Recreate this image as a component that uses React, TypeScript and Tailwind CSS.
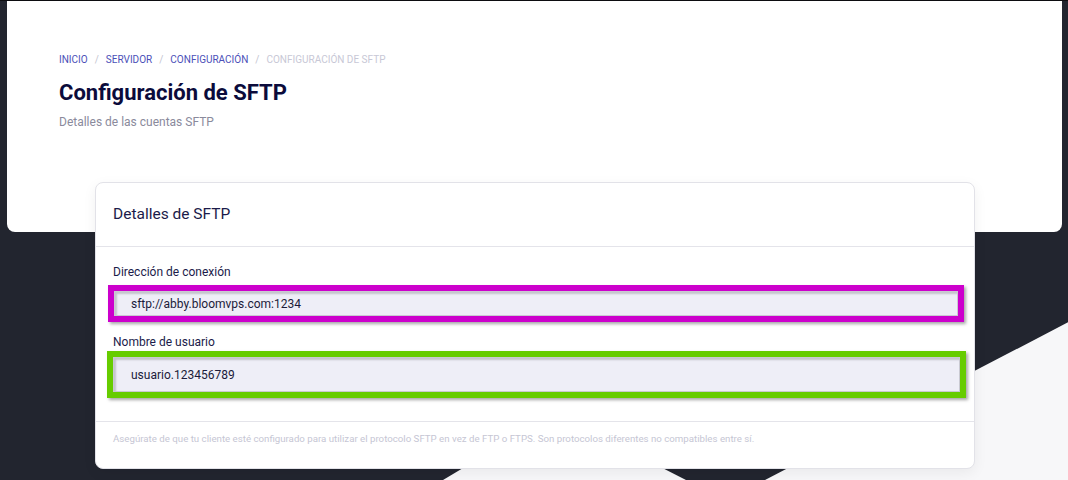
export default function App() {
  const font = { fontFamily: "Roboto, 'Liberation Sans', sans-serif" };

  return (
    <div
      className="relative h-[480px] w-full overflow-hidden bg-[#22252f] border-t border-[#0c0c10]"
      style={font}
    >
      {/* decorative zigzag behind the card */}
      <svg
        className="absolute inset-0 h-full w-full"
        viewBox="0 0 1068 480"
        preserveAspectRatio="none"
      >
        <polygon
          points="443,480 555,413 686,480 765,480 1068,322 1068,480"
          fill="#f7f7f9"
        />
      </svg>

      <div className="relative mx-[7px] mr-[6px] h-[231px] rounded-b-lg bg-white pl-[52px] pt-[51px]">
        <nav className="flex items-center gap-[7px] text-[10px] uppercase text-[#4b4fb8]">
          <span>Inicio</span>
          <span className="text-[#c4c4d0]">/</span>
          <span>Servidor</span>
          <span className="text-[#c4c4d0]">/</span>
          <span>Configuración</span>
          <span className="text-[#c4c4d0]">/</span>
          <span className="text-[#c8c8d6]">Configuración de SFTP</span>
        </nav>
        <h1 className="mt-[11px] text-[22px] font-bold leading-[30px] text-[#0b0b3b]">
          Configuración de SFTP
        </h1>
        <p className="mt-[5px] text-[12px] text-[#8a8a9c]">Detalles de las cuentas SFTP</p>
      </div>

      <div className="relative ml-[95px] -mt-[50px] h-[287px] w-[880px] rounded-lg border border-[#e2e2e8] bg-white shadow-[0_4px_14px_rgba(0,0,0,0.06)]">
        <div className="flex h-[64px] items-center border-b border-[#e4e4ea] pl-[17px] text-[15.5px] text-[#1b1b4a]">
          Detalles de SFTP
        </div>

        <div className="px-[12px] pt-[17px]">
          <label className="block pl-[5px] text-[12px] leading-[16px] text-[#1b1b4a]">
            Dirección de conexión
          </label>
          <div className="mt-[5px] w-[856px] border-[6px] border-[#cc00cc] shadow-[2px_2px_3px_rgba(0,0,0,0.35)]">
            <div className="flex h-[25px] items-center border border-[#c9c9d2] bg-[#eeeef7] pl-[16px] text-[12px] text-[#1b1b3a] shadow-[inset_2px_2px_2px_rgba(0,0,0,0.18)]">
              sftp://abby.bloomvps.com:1234
            </div>
          </div>

          <label className="mt-[12px] block pl-[5px] text-[12px] leading-[16px] text-[#1b1b4a]">
            Nombre de usuario
          </label>
          <div className="mt-[1px] -ml-[1px] w-[859px] border-[6px] border-[#66cc00] shadow-[2px_2px_3px_rgba(0,0,0,0.35)]">
            <div className="flex h-[35px] items-center border border-[#c9c9d2] bg-[#eeeef7] pl-[17px] text-[12px] text-[#1b1b3a] shadow-[inset_2px_2px_2px_rgba(0,0,0,0.18)]">
              usuario.123456789
            </div>
          </div>
        </div>

        <div className="mt-[23px] border-t border-[#e4e4ea] pl-[17px] pt-[10px] text-[9.7px] leading-[14px] text-[#c6c6d4]">
          Asegúrate de que tu cliente esté configurado para utilizar el protocolo SFTP en vez de FTP o FTPS. Son protocolos diferentes no compatibles entre sí.
        </div>
      </div>
    </div>
  );
}
